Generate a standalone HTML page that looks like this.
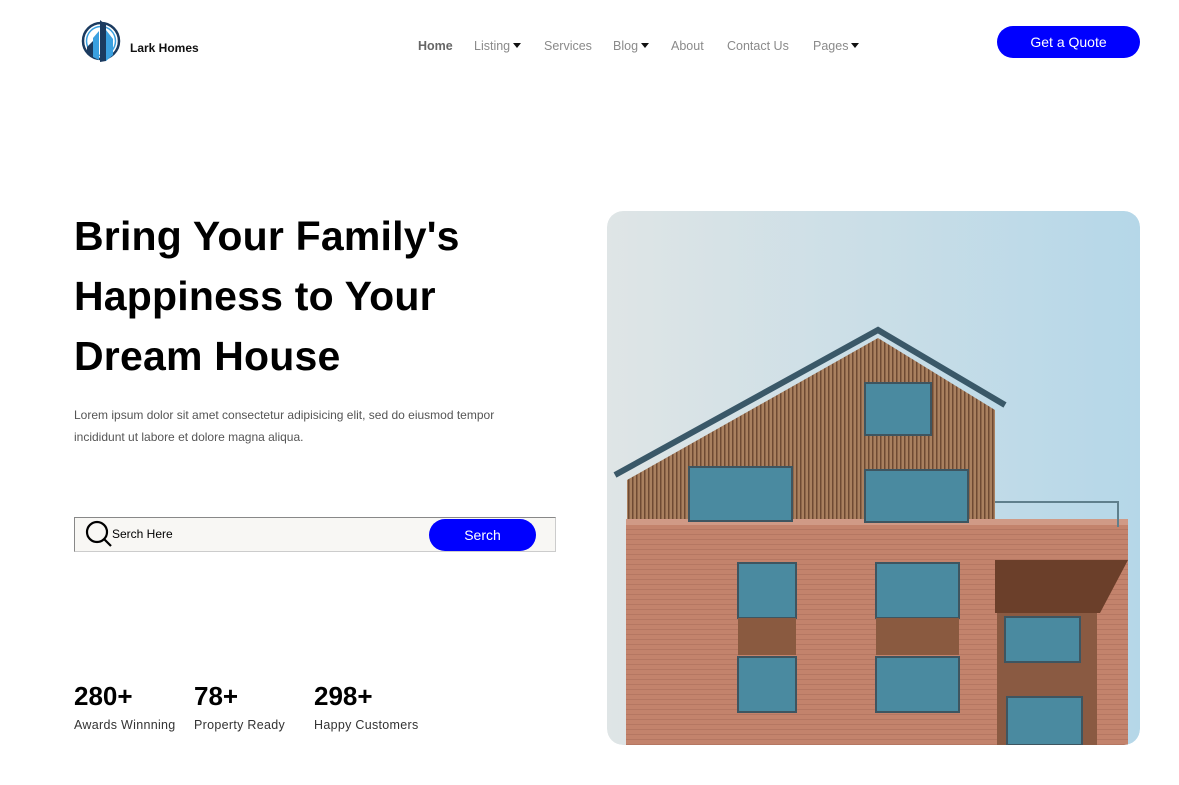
<!DOCTYPE html>
<html><head><meta charset="utf-8"><style>
*{margin:0;padding:0;box-sizing:border-box}
body{width:1179px;height:785px;background:#fff;font-family:"Liberation Sans",sans-serif;position:relative;overflow:hidden}
.nav a{position:absolute;top:39px;font-size:12.5px;color:#8a8a8a;text-decoration:none;white-space:nowrap}
.car{display:inline-block;border-left:4px solid transparent;border-right:4px solid transparent;border-top:5px solid #111;margin-left:3px;vertical-align:2px}
h1{position:absolute;left:74px;top:206px;font-size:41px;line-height:60px;font-weight:bold;color:#000;letter-spacing:0.2px}
.p{position:absolute;left:74px;top:404px;font-size:12px;line-height:22px;color:#555;width:462px}
.stat{position:absolute;top:680px}
.stat b{display:block;font-size:26px;color:#000;line-height:32px}
.stat span{font-size:12.5px;color:#333;display:block;margin-top:6px;letter-spacing:0.3px}
</style></head><body>
<svg style="position:absolute;left:80px;top:16px" width="44" height="48" viewBox="0 0 44 48">
<circle cx="21" cy="25" r="18" fill="none" stroke="#1b3b60" stroke-width="2.5"/>
<circle cx="21" cy="25" r="14.5" fill="none" stroke="#3aa0e0" stroke-width="1.5"/>
<polygon points="7,31 13,25 13,40 7,36" fill="#1b3b60"/>
<polygon points="13,22 19,15 19,44 13,41" fill="#3aa0e0"/>
<polygon points="20,4 26,9 26,45 20,46" fill="#1b3b60"/>
<polygon points="26,14 33,23 33,39 26,45" fill="#3aa0e0"/>
</svg>
<div style="position:absolute;left:130px;top:41px;font-size:12px;color:#111;font-weight:bold">Lark Homes</div>
<div class="nav">
<a style="left:418px;color:#666;font-weight:bold">Home</a>
<a style="left:474px">Listing<i class="car"></i></a>
<a style="left:544px">Services</a>
<a style="left:613px">Blog<i class="car"></i></a>
<a style="left:671px">About</a>
<a style="left:727px">Contact Us</a>
<a style="left:813px">Pages<i class="car"></i></a>
</div>
<div style="position:absolute;left:997px;top:26px;width:143px;height:32px;border-radius:16px;background:#0000ff;color:#fff;font-size:14px;text-align:center;line-height:32px">Get a Quote</div>
<h1>Bring Your Family's<br>Happiness to Your<br>Dream House</h1>
<div class="p">Lorem ipsum dolor sit amet consectetur adipisicing elit, sed do eiusmod tempor incididunt ut labore et dolore magna aliqua.</div>
<div style="position:absolute;left:74px;top:517px;width:482px;height:35px;background:#f8f7f4;border:1px solid #888;border-bottom-color:#ccc;border-right-color:#ccc"></div>
<svg style="position:absolute;left:84px;top:519px" width="30" height="30" viewBox="0 0 30 30"><circle cx="13" cy="13" r="10" fill="none" stroke="#000" stroke-width="2.2"/><line x1="20" y1="20" x2="27" y2="27" stroke="#000" stroke-width="2.2"/></svg>
<div style="position:absolute;left:112px;top:527px;font-size:12px;color:#000">Serch Here</div>
<div style="position:absolute;left:429px;top:519px;width:107px;height:32px;border-radius:16px;background:#0000ff;color:#fff;font-size:14px;text-align:center;line-height:32px">Serch</div>
<div class="stat" style="left:74px"><b>280+</b><span>Awards Winnning</span></div>
<div class="stat" style="left:194px"><b>78+</b><span>Property Ready</span></div>
<div class="stat" style="left:314px"><b>298+</b><span>Happy Customers</span></div>
<svg style="position:absolute;left:607px;top:211px;border-radius:16px" width="533" height="534" viewBox="607 211 533 534">
<defs><linearGradient id="sky" x1="0" y1="0" x2="1" y2="0"><stop offset="0" stop-color="#dfe5e6"/><stop offset="1" stop-color="#b5d7e8"/></linearGradient>
<pattern id="wood" width="4" height="10" patternUnits="userSpaceOnUse"><rect width="4" height="10" fill="#a9805f"/><rect width="1.5" height="10" fill="#6e4a33"/></pattern>
<pattern id="brick" width="8" height="5" patternUnits="userSpaceOnUse"><rect width="8" height="5" fill="#c3836c"/><rect y="4" width="8" height="1" fill="#b57762"/></pattern>
<clipPath id="c"><rect x="607" y="211" width="533" height="534" rx="16"/></clipPath></defs>
<g clip-path="url(#c)">
<rect x="607" y="211" width="533" height="534" fill="url(#sky)"/>
<polygon points="627,480 878,338 995,410 995,522 627,522" fill="url(#wood)"/>
<polyline points="615,475 878,330 1005,405" fill="none" stroke="#3a5868" stroke-width="6"/>
<rect x="626" y="520" width="502" height="225" fill="url(#brick)"/>
<rect x="626" y="519" width="502" height="6" fill="#d09a86"/>
<polyline points="995,502 1118,502 1118,527" fill="none" stroke="#5f7f8c" stroke-width="2"/>
<polygon points="995,560 1128,560 1100,613 995,613" fill="#6b3f2a"/>
<rect x="997" y="613" width="100" height="132" fill="#8a5a42"/>
<g fill="#4a8aa0" stroke="#3e5560" stroke-width="2">
<rect x="865" y="383" width="66" height="52"/>
<rect x="689" y="467" width="103" height="54"/>
<rect x="865" y="470" width="103" height="52"/>
<rect x="738" y="563" width="58" height="55"/>
<rect x="876" y="563" width="83" height="55"/>
<rect x="738" y="657" width="58" height="55"/>
<rect x="876" y="657" width="83" height="55"/>
<rect x="1005" y="617" width="75" height="45"/>
<rect x="1007" y="697" width="75" height="48"/>
</g>
<rect x="738" y="618" width="58" height="37" fill="#8a5a40"/>
<rect x="876" y="618" width="83" height="37" fill="#8a5a40"/>
</g>
</svg>
</body></html>
